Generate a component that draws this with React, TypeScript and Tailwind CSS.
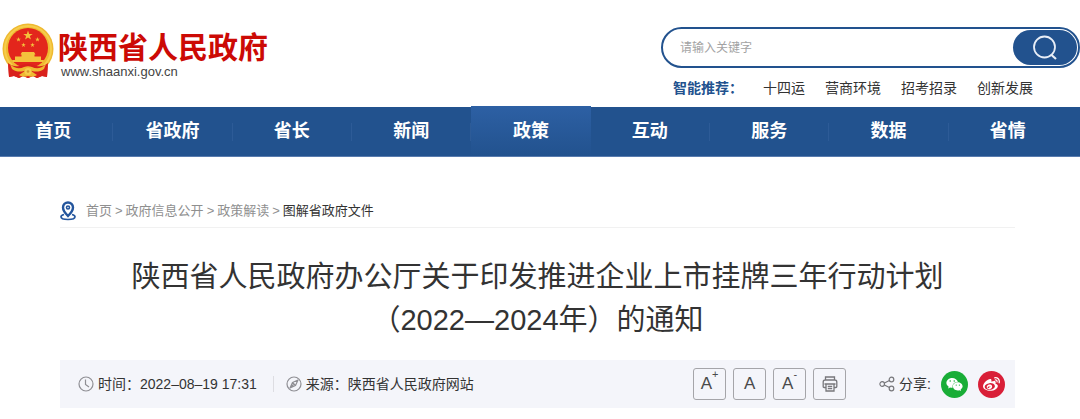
import { FaWeibo, FaWeixin } from "react-icons/fa";

const navItems = ["首页", "省政府", "省长", "新闻", "政策", "互动", "服务", "数据", "省情"];
const hotWords = ["十四运", "营商环境", "招考招录", "创新发展"];
const crumbs = ["首页", "政府信息公开", "政策解读"];

const STAR = "M0-1 .23-.31.95-.31.37.12.59.81 0 .38-.59.81-.37.12-.95-.31-.23-.31Z";

function Emblem() {
  return (
    <svg viewBox="0 0 52 56" className="h-14 w-[52px]" aria-hidden="true">
      <path d="M6 38h40l-1 16-5-1-5 2-4-2-5 2-5-2-4 2-5-2-5 1Z" fill="#d9211c" />
      <circle cx="26" cy="26" r="25.500" fill="#efb930" />
      <circle cx="26" cy="26" r="23" fill="none" stroke="#f6cd4c" strokeWidth="2" />
      <circle cx="26" cy="25" r="20" fill="#e3261c" />
      <g fill="#f4c23c">
        <path d={STAR} transform="translate(26 12.5) scale(5)" />
        <path d={STAR} transform="translate(16.5 16.5) scale(2.5)" />
        <path d={STAR} transform="translate(35.5 16.5) scale(2.5)" />
        <path d={STAR} transform="translate(21.5 22) scale(2.4)" />
        <path d={STAR} transform="translate(30.5 22) scale(2.4)" />
        <path d="M20 29h12l1.500 2.500h-15ZM19.500 31.500h13v2h-13ZM13 33.500h26V37H13ZM10 37h32l-1 2H11Z" />
      </g>
      <path d="M6 40c5 4 10 4 14 2 4-1.500 8-1.500 12 0 4 2 9 2 14-2l-1 14-5-1-5 2-4-2-5 2-5-2-4 2-5-2-5 1Z" fill="#d9211c" />
      <path d="M8 41c5 5 10 5 14 3 3-1 5-1 8 0 4 2 9 2 14-3l-2 5c-4 3-8 3-12 2l-4-1-4 1c-4 1-8 1-12-2Z" fill="#efb930" />
      <path d="M17 52c2-1 4-3 6-4h6c2 1 4 3 6 4-3 2-6 2-9 1-3 1-6 1-9-1Z" fill="#efb930" />
      <circle cx="26" cy="48.500" r="3.500" fill="#f6cd4c" />
      <circle cx="26" cy="48.500" r="1.300" fill="#d8952a" />
    </svg>
  );
}

function PinIcon() {
  return (
    <svg viewBox="0 0 16 20" className="h-5 w-4" fill="none" stroke="#24569d" aria-hidden="true">
      <path d="M8 15C5 12 3 9.500 3 6.500a5 5 0 0 1 10 0c0 3-2 5.500-5 8.500Z" strokeWidth="2.400" />
      <circle cx="8" cy="6.500" r="1.500" strokeWidth="1.600" />
      <path d="M4 13.500c-2 .5-3 1.300-3 2.300 0 1.700 3 2.700 7 2.700s7-1 7-2.700c0-1-1-1.800-3-2.300" strokeWidth="1.700" />
    </svg>
  );
}

function ClockIcon() {
  return (
    <svg viewBox="0 0 16 16" className="size-4" fill="none" stroke="#8f8f94" strokeWidth="1.200" aria-hidden="true">
      <circle cx="8" cy="8" r="7" />
      <path d="M7.500 3.500V8.500l3.500 2.500" />
    </svg>
  );
}

function CompassIcon() {
  return (
    <svg viewBox="0 0 16 16" className="size-4" fill="none" stroke="#8f8f94" strokeWidth="1.200" aria-hidden="true">
      <circle cx="8" cy="8" r="7" />
      <path d="M12 4 9.500 9.500 4 12l2.500-5.500ZM6.500 6.500l3 3M4 12l4-4" strokeLinejoin="round" />
    </svg>
  );
}

function PrinterIcon() {
  return (
    <svg viewBox="0 0 16 16" className="size-4" fill="none" stroke="#77777b" strokeWidth="1.300" aria-hidden="true">
      <path d="M3.500 4V1h9v3M4 11.500H2.200c-.6 0-1-.4-1-1V6c0-1.200.8-2 2-2h9.600c1.200 0 2 .8 2 2v4.500c0 .6-.4 1-1 1H12" />
      <path d="M4 8h8v7H4ZM2.500 8h11M5.800 10.500h4.400M5.800 12.700h4.400" />
    </svg>
  );
}

function ShareIcon() {
  return (
    <svg viewBox="0 0 16 16" className="size-4" fill="none" stroke="#77777b" strokeWidth="1.200" aria-hidden="true">
      <circle cx="3.200" cy="8" r="2.300" />
      <circle cx="12.500" cy="3.500" r="2.300" />
      <circle cx="12.500" cy="12.500" r="2.300" />
      <path d="m5.400 7 5-2.500M5.400 9l5 2.500" />
    </svg>
  );
}

const toolButton =
  "flex h-8 w-[33px] items-center justify-center rounded-[3px] border border-[#a5a5a9] text-[17px] leading-6 text-[#4a4a4a]";
const toolMark = "self-start pt-1 text-[11px] leading-3";

export default function App() {
  return (
    <div className="bg-white font-['Liberation_Sans','Noto_Sans_CJK_SC',sans-serif] text-[#333]">
      <header className="flex items-start justify-between pb-[7px]">
        <a href="#" className="flex pt-[23px] pl-0.5">
          <Emblem />
          <span className="flex flex-col pt-[5px] pl-1">
            <span className="text-[30px] leading-10 font-bold text-[#cc0a05]">陕西省人民政府</span>
            <span className="pl-[3px] text-[13px] leading-2 text-[#444]">www.shaanxi.gov.cn</span>
          </span>
        </a>
        <div className="w-[419px] pt-[27px]">
          <form className="flex h-[41px] items-stretch rounded-full border-2 border-[#22528e] p-px" onSubmit={(e) => e.preventDefault()}>
            <input
              type="text"
              aria-label="请输入关键字"
              placeholder="请输入关键字"
              className="min-w-0 flex-1 rounded-full bg-transparent pl-4 text-xs outline-none placeholder:text-[#a3a3a3]"
            />
            <button type="submit" aria-label="搜索" className="flex w-16 items-center justify-center rounded-full bg-[#22528e]">
              <svg viewBox="0 0 26 26" className="size-[26px]" fill="none" stroke="#e8eef7" strokeWidth="1.800" aria-hidden="true">
                <circle cx="12.500" cy="12" r="10.500" />
                <path d="m19 19.500 5 4.500" strokeWidth="2.200" />
              </svg>
            </button>
          </form>
          <div className="flex gap-5 pt-2 pl-3 text-sm leading-6">
            <span className="font-bold text-[#22528e]">智能推荐：</span>
            {hotWords.map((w) => (
              <a key={w} href="#">{w}</a>
            ))}
          </div>
        </div>
      </header>

      <nav className="border-b border-[#587bae] bg-[#22528e]">
        <ul className="-ml-1.5 mr-3 grid grid-cols-9">
          {navItems.map((item) =>
            item === "政策" ? (
              <li key={item} className="-mt-px bg-linear-to-b from-[#2d60a4] to-[#22528e]">
                <a href="#" aria-current="page" className="block py-3 text-center text-lg leading-[26px] font-bold text-white">{item}</a>
              </li>
            ) : (
              <li key={item} className="group flex items-center">
                <a href="#" className="block flex-1 py-3 text-center text-lg leading-[25px] font-bold text-white">{item}</a>
                <span className="h-[18px] w-px bg-[#2d5b97] group-last:bg-transparent" />
              </li>
            ),
          )}
        </ul>
      </nav>

      <main className="pr-[65px] pl-[60px]">
        <div className="mt-10 flex items-center gap-2.5 border-b border-[#f1f1f1] pt-1 pb-1.5 text-[13px] leading-5">
          <PinIcon />
          <div className="flex gap-[3px] text-[#8f8f8f]">
            {crumbs.map((c) => (
              <span key={c} className="flex gap-[3px]">
                <a href="#">{c}</a>
                <span>&gt;</span>
              </span>
            ))}
            <a href="#" className="text-[#333]">图解省政府文件</a>
          </div>
        </div>

        <h1 className="pt-7 text-center text-[29px] leading-[43px]">
          陕西省人民政府办公厅关于印发推进企业上市挂牌三年行动计划
          <br />
          （2022—2024年）的通知
        </h1>

        <div className="mt-[18px] flex h-12 items-center bg-[#f4f5fa] pr-2.5 pl-[18px] text-sm">
          <ClockIcon />
          <span className="pl-1">
            时间：<time dateTime="2022-08-19T17:31">2022–08–19 17:31</time>
          </span>
          <span className="mr-3 ml-4 h-4 w-px bg-[#dddde2]" />
          <CompassIcon />
          <span className="pl-1">来源：陕西省人民政府网站</span>
          <div className="ml-auto flex gap-[7px]">
            <button type="button" aria-label="放大字号" className={toolButton}>
              <span>A</span><sup className={toolMark}>+</sup>
            </button>
            <button type="button" aria-label="默认字号" className={toolButton}>A</button>
            <button type="button" aria-label="缩小字号" className={toolButton}>
              <span>A</span><sup className={toolMark}>-</sup>
            </button>
            <button type="button" aria-label="打印" className={toolButton}><PrinterIcon /></button>
          </div>
          <div className="flex items-center pl-[33px]">
            <ShareIcon />
            <span className="pr-2.5 pl-1">分享:</span>
            <a href="#" aria-label="微信" className="flex size-[27px] items-center justify-center rounded-full bg-[#19ad37] text-white">
              <FaWeixin className="size-[17px]" />
            </a>
            <a href="#" aria-label="微博" className="ml-2.5 flex size-[27px] items-center justify-center rounded-full bg-[#d91f38] text-white">
              <FaWeibo className="size-[17px]" />
            </a>
          </div>
        </div>
      </main>
    </div>
  );
}
